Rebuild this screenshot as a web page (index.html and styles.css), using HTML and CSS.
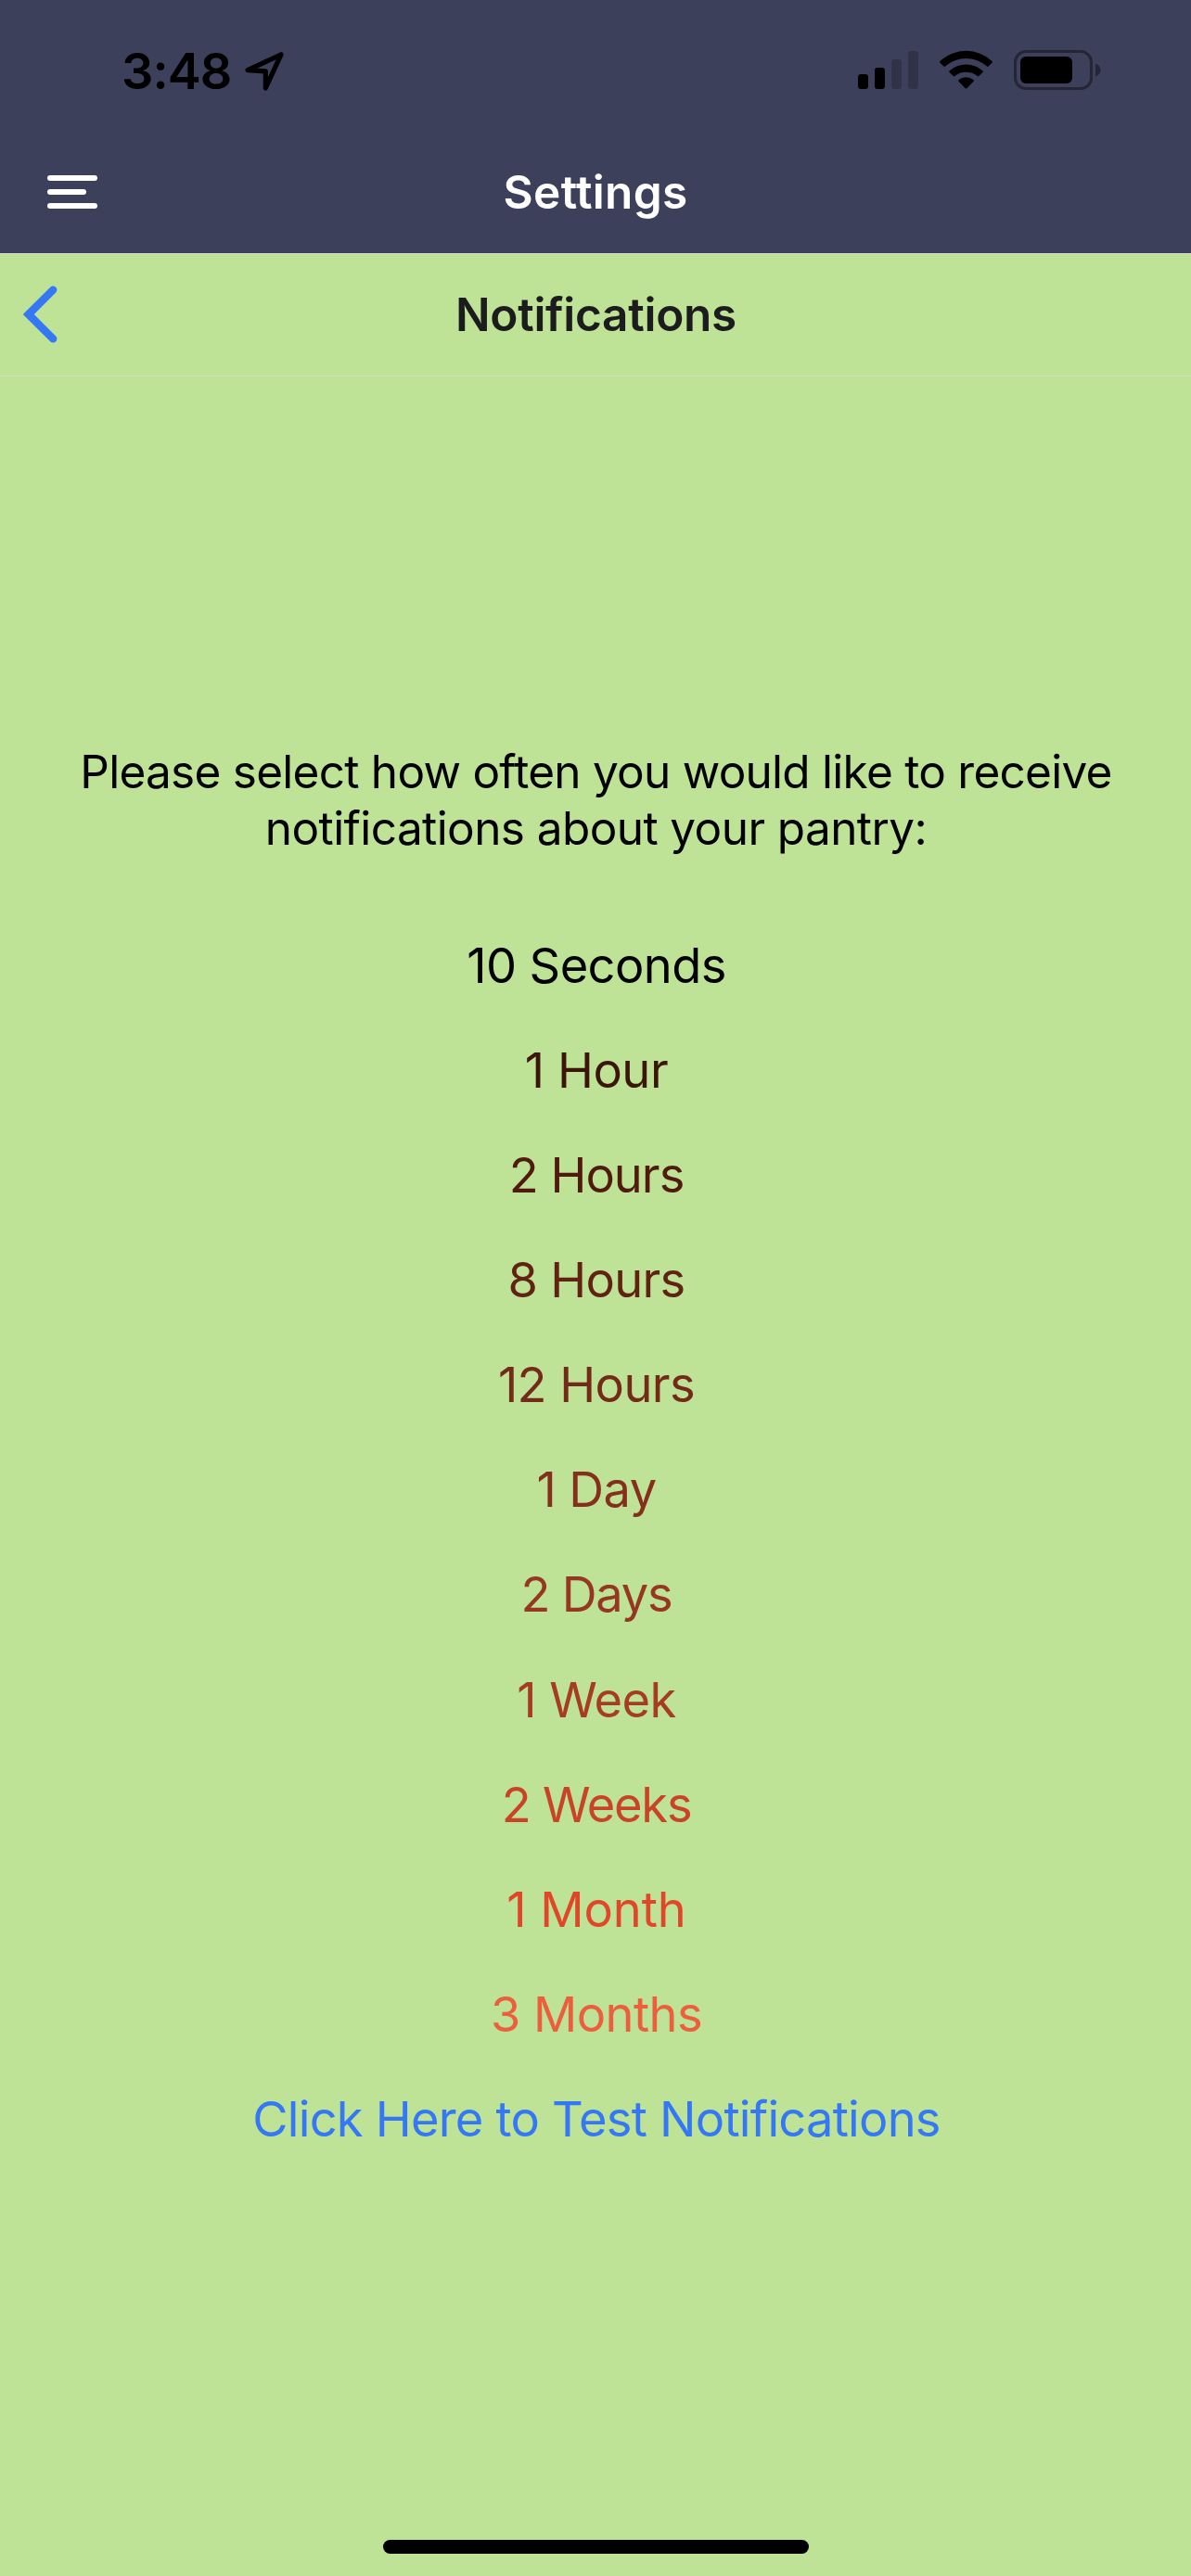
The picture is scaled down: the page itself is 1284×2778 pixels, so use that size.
FILE: index.html
```
<!DOCTYPE html>
<html lang="en">
<head>
<meta charset="utf-8">
<title>Settings – Notifications</title>
<link rel="stylesheet" href="styles.css">
</head>
<body>
<div class="screen">
  <header class="top">
    <div class="status">
      <div class="status-left">
        <span class="time">3:48</span>
        <svg class="location" width="42" height="42" viewBox="0 0 42 42"><path d="M3 19.6 39 2.8 22.3 39 22.3 20.8Z" fill="none" stroke="#000" stroke-width="5.2" stroke-linejoin="round"/></svg>
      </div>
      <div class="status-right">
        <svg width="66" height="43" viewBox="0 0 66 43"><rect x="0" y="26" width="11" height="16" rx="3"/><rect x="18" y="19" width="11" height="23" rx="3"/><g opacity=".2"><rect x="36" y="10" width="11" height="32" rx="3"/><rect x="54" y="1" width="11" height="41" rx="3"/></g></svg>
        <svg width="58" height="43" viewBox="0 0 58 43"><path d="M0.6 11.8A41 41 0 0 1 56.4 11.8Q57.4 12.8 56.5 13.7L52.6 17.6Q51.8 18.4 51 17.6A33.5 33.5 0 0 0 6 17.6Q5.2 18.4 4.4 17.6L.5 13.7Q-.4 12.8 .6 11.8Z"/><path d="M10.6 22.2A27 27 0 0 1 46.4 22.2Q47.3 23.2 46.4 24.1L42.3 28Q41.6 28.8 40.8 28A19.5 19.5 0 0 0 16.2 28Q15.4 28.8 14.7 28L10.6 24.1Q9.7 23.2 10.6 22.2Z"/><path d="M20.6 32A12.6 12.6 0 0 1 36.4 32Q37.4 33 36.4 33.9L29.3 41.2Q28.5 42 27.7 41.2L20.6 33.9Q19.6 33 20.6 32Z"/></svg>
        <svg width="95" height="43" viewBox="0 0 95 43"><g opacity=".4"><rect x="1.5" y="1.5" width="82" height="40" rx="11.5" fill="none" stroke="#000" stroke-width="3"/><path d="M88 14.5Q93.6 16.5 93.6 21.5T88 28.5Z"/></g><rect x="7" y="7" width="56" height="29" rx="6"/></svg>
      </div>
    </div>
    <nav class="navbar">
      <svg class="menu" width="54" height="36" viewBox="0 0 54 36" fill="#fff"><rect width="54" height="6" rx="3"/><rect y="15" width="42" height="6" rx="3"/><rect y="30" width="54" height="6" rx="3"/></svg>
      <h1 class="title title-settings">Settings</h1>
    </nav>
  </header>
  <div class="subbar">
    <svg class="back" width="37" height="62" viewBox="0 0 37 62"><path d="M32.2 4.6 5.8 31 32.2 57.4" fill="none" stroke="#3478f6" stroke-width="8.4" stroke-linecap="round"/></svg>
    <h2 class="title title-page">Notifications</h2>
  </div>
  <main class="content">
    <p class="message"><span class="line-one">Please select how often you would like to receive</span><br>notifications about your pantry:</p>
    <ul class="options">
      <li class="seconds">10 Seconds</li>
      <li class="hour-1">1 Hour</li>
      <li class="hour-2">2 Hours</li>
      <li class="hour-8">8 Hours</li>
      <li class="hour-12">12 Hours</li>
      <li class="day-1">1 Day</li>
      <li class="day-2">2 Days</li>
      <li class="week-1">1 Week</li>
      <li class="week-2">2 Weeks</li>
      <li class="month-1">1 Month</li>
      <li class="month-3">3 Months</li>
      <li class="test">Click Here to Test Notifications</li>
    </ul>
  </main>
  <div class="home-indicator"></div>
</div>
</body>
</html>
```
FILE: styles.css
```
* { box-sizing: border-box; }
body { margin: 0; }
h1, h2, p, ul { margin: 0; padding: 0; }
svg { display: block; flex: none; }

.screen {
  width: 1284px;
  height: 2778px;
  display: flex;
  flex-direction: column;
  background: #bee296;
  font-family: "Inter", "Liberation Sans", sans-serif;
  color: #000;
}

.top { height: 274px; background: #3d405b; border-bottom: 1px solid #d8d8d8; }

.status {
  height: 141px;
  padding: 12px 96px 0 131px;
  display: flex;
  justify-content: space-between;
}
.status-left { display: flex; }
.time { width: 133px; font-size: 54px; font-weight: 600; line-height: 130px; letter-spacing: -0.9px; }
.location { margin-top: 44px; }
.status-right { display: flex; margin-top: 42px; gap: 22px; }

.navbar, .subbar { display: grid; grid-template-columns: 150px 1fr 150px; align-items: center; }
.navbar { height: 132px; }
.subbar { height: 132px; padding-bottom: 2px; border-bottom: 1px solid #d3dcc8; }
.menu { margin-left: 51px; }
.back { margin-left: 25px; }
.title { text-align: center; font-size: 49.5px; line-height: 60px; font-weight: 600; }
.title-settings { color: #fff; letter-spacing: 0.35px; }
.title-page { padding-left: 1px; color: #1c1c1e; letter-spacing: -0.27px; }

.content { flex: 1; padding: 395.5px 0 0 1px; text-align: center; }
.message { font-size: 49.5px; line-height: 61px; letter-spacing: -0.59px; white-space: nowrap; }
.line-one { letter-spacing: -0.74px; }

.options { margin-top: 61px; padding-left: 1px; list-style: none; font-size: 52.4px; line-height: 113.15px; letter-spacing: -0.56px; }
.hour-1 { color: #3b150a; letter-spacing: -0.47px; }
.hour-2 { color: #501b0e; letter-spacing: -0.96px; }
.hour-8 { color: #602313; letter-spacing: -0.7px; }
.hour-12 { color: #732a18; }
.day-1 { color: #85301d; }
.day-2 { color: #963721; letter-spacing: -1.2px; }
.week-1 { color: #a63c24; }
.week-2 { color: #c94426; letter-spacing: -1.2px; }
.month-1 { color: #e04628; letter-spacing: -0.06px; }
.month-3 { color: #ec5f3d; }
.test { color: #3478f6; letter-spacing: -0.76px; }

.home-indicator { width: 459px; height: 15px; margin: 0 auto 24px 413px; border-radius: 8px; background: #000; }
```
